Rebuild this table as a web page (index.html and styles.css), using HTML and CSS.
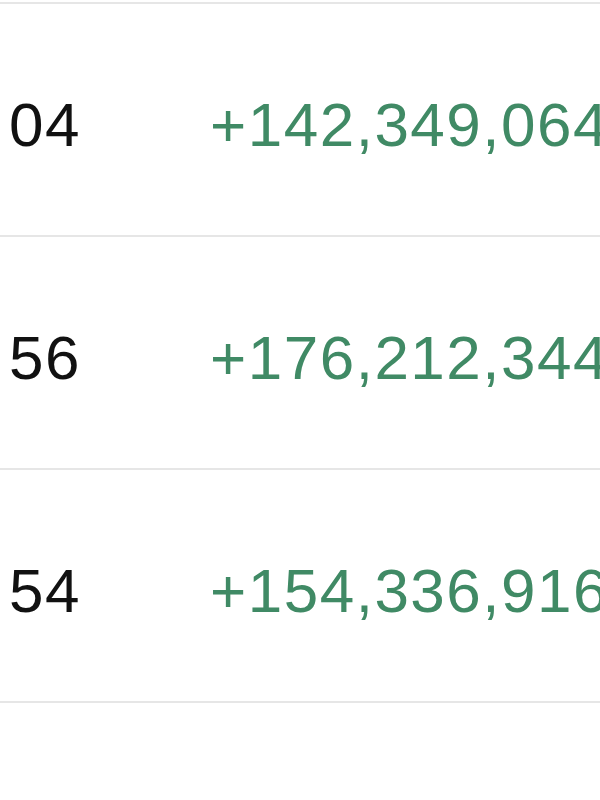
FILE: index.html
```html
<!DOCTYPE html>
<html lang="en">
<head>
    <meta charset="UTF-8">
    <meta name="viewport" content="width=device-width, initial-scale=1.0">
    <title>Balance changes</title>
    <link rel="stylesheet" href="styles.css">
</head>
<body>
    <div class="table">
        <div class="row">
            <div class="cell amount">04</div>
            <div class="cell change">+142,349,064</div>
        </div>
        <div class="row">
            <div class="cell amount">56</div>
            <div class="cell change">+176,212,344</div>
        </div>
        <div class="row">
            <div class="cell amount">54</div>
            <div class="cell change">+154,336,916</div>
        </div>
        <div class="row row-empty"></div>
    </div>
</body>
</html>
```

FILE: styles.css
```css
/* table styles */
body {
    margin: 0;
    padding: 2px 0 0 0;
    background-color: #fff;
    font-family: "Liberation Sans", Arial, sans-serif;
    overflow: hidden;
}
.table {
    display: flex;
    flex-direction: column;
}
.row {
    display: flex;
    align-items: center;
    height: 222px;
    border-top: 2px solid #e6e6e6;
    padding-top: 9px;
    font-size: 62px;
    letter-spacing: 1.5px;
    white-space: nowrap;
}
.row-empty {
    height: 100px;
}
.cell {
    display: flex;
    flex-shrink: 0;
}
.amount {
    width: 81px;
    justify-content: flex-end;
    color: #111;
}
.change {
    margin-left: 129px;
    color: #408a65;
}
```
